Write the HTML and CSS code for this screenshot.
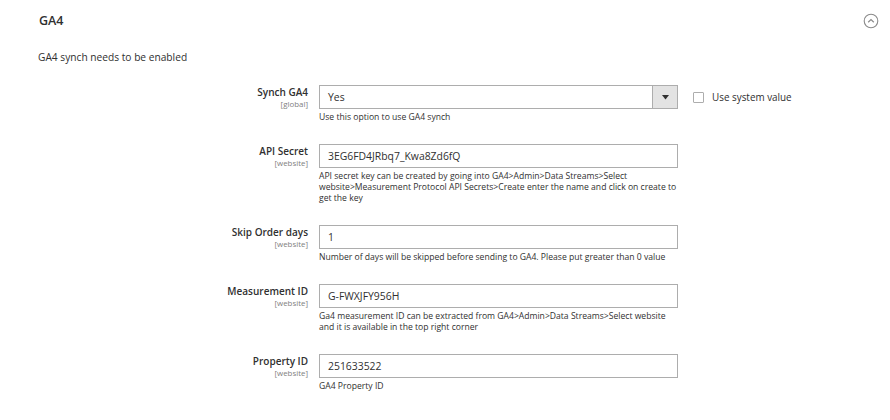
FILE: index.html
```html
<!DOCTYPE html>
<html>
<head>
<meta charset="utf-8">
<link rel="stylesheet" href="styles.css">
</head>
<body>
<div class="section">
  <div class="section-head">
    <h2 class="title">GA4</h2>
    <span class="toggle">
      <svg width="16" height="16" viewBox="0 0 16 16"><circle cx="8" cy="8" r="6.8" fill="none" stroke="#8a8a8a" stroke-width="1.1"/><path d="M5.2 9.3 L8 6.6 L10.8 9.3" fill="none" stroke="#8a8a8a" stroke-width="1.2"/></svg>
    </span>
  </div>
  <p class="comment">GA4 synch needs to be enabled</p>

  <div class="form">
    <div class="row">
      <div class="label"><span class="name">Synch GA4</span><span class="scope">[global]</span></div>
      <div class="value">
        <div class="select"><span class="select-text">Yes</span><span class="select-arrow"><svg width="7" height="5" viewBox="0 0 7 5"><path d="M0 0 H7 L3.5 4.5 Z" fill="#303030"/></svg></span></div>
        <p class="note">Use this option to use GA4 synch</p>
      </div>
      <label class="use-default"><span class="checkbox"></span>Use system value</label>
    </div>

    <div class="row">
      <div class="label"><span class="name">API Secret</span><span class="scope">[website]</span></div>
      <div class="value">
        <div class="input">3EG6FD4JRbq7_Kwa8Zd6fQ</div>
        <p class="note">API secret key can be created by going into GA4&gt;Admin&gt;Data Streams&gt;Select website&gt;Measurement Protocol API Secrets&gt;Create enter the name and click on create to get the key</p>
      </div>
    </div>

    <div class="row">
      <div class="label"><span class="name">Skip Order days</span><span class="scope">[website]</span></div>
      <div class="value">
        <div class="input">1</div>
        <p class="note">Number of days will be skipped before sending to GA4. Please put greater than 0 value</p>
      </div>
    </div>

    <div class="row">
      <div class="label"><span class="name">Measurement ID</span><span class="scope">[website]</span></div>
      <div class="value">
        <div class="input">G-FWXJFY956H</div>
        <p class="note">Ga4 measurement ID can be extracted from GA4&gt;Admin&gt;Data Streams&gt;Select website and it is available in the top right corner</p>
      </div>
    </div>

    <div class="row">
      <div class="label"><span class="name">Property ID</span><span class="scope">[website]</span></div>
      <div class="value">
        <div class="input">251633522</div>
        <p class="note">GA4 Property ID</p>
      </div>
    </div>
  </div>
</div>
</body>
</html>
```

FILE: styles.css
```css
html, body {
  margin: 0;
  padding: 0;
  background: #ffffff;
}
body {
  font-family: "Open Sans", "Noto Sans", sans-serif;
  color: #303030;
  width: 890px;
  height: 420px;
  overflow: hidden;
}
.section {
  padding: 0 11px 0 39px;
}
.section-head {
  display: flex;
  justify-content: space-between;
  align-items: center;
  height: 40px;
}
.title {
  margin: 0;
  font-size: 12.5px;
  font-weight: 600;
  color: #303030;
}
.toggle {
  display: flex;
  width: 16px;
  height: 16px;
  margin-top: 2px;
}
.comment {
  margin: 10px 0 0 -1px;
  font-size: 10.2px;
  line-height: 14px;
  color: #303030;
}
.form {
  margin-top: 21px;
  margin-left: -39px;
}
.row {
  display: grid;
  grid-template-columns: 308px 359px auto;
  column-gap: 11px;
  margin-bottom: 21px;
}
.label {
  display: flex;
  flex-direction: column;
  align-items: flex-end;
  padding-top: 1px;
}
.name {
  font-size: 10px;
  font-weight: 600;
  line-height: 13px;
  color: #303030;
}
.scope {
  font-size: 7.9px;
  line-height: 10px;
  color: #808080;
}
.value {
  display: flex;
  flex-direction: column;
}
.input, .select {
  box-sizing: border-box;
  height: 24px;
  border: 1px solid #adadad;
  font-size: 10.4px;
  line-height: 22px;
  padding-left: 8px;
  color: #303030;
  background: #fff;
}
.select {
  display: flex;
  justify-content: space-between;
  padding-right: 0;
}
.select-arrow {
  width: 24px;
  height: 22px;
  background: #e3e3e3;
  border-left: 1px solid #adadad;
  display: flex;
  align-items: center;
  justify-content: center;
}
.note {
  margin: 3px 0 0;
  font-size: 8.6px;
  line-height: 11px;
  color: #303030;
}
.use-default {
  display: flex;
  align-items: center;
  height: 24px;
  font-size: 9.9px;
  color: #303030;
  margin-left: 4px;
}
.checkbox {
  box-sizing: border-box;
  width: 11px;
  height: 11px;
  border: 1px solid #adadad;
  border-radius: 1px;
  margin-right: 8px;
  background: #fff;
}
```
